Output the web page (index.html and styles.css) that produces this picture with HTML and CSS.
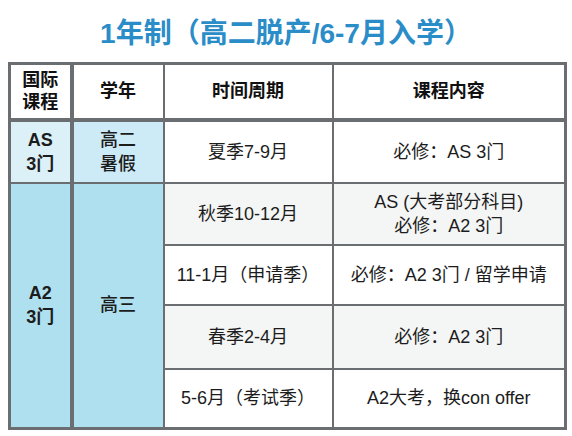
FILE: index.html
```html
<!DOCTYPE html>
<html lang="zh-CN">
<head>
<meta charset="utf-8">
<title>1年制</title>
<link rel="stylesheet" href="styles.css">
</head>
<body>
<h1 class="title">1年制（高二脱产/6-7月入学）</h1>
<table class="plan">
  <colgroup>
    <col class="w1"><col class="w2"><col class="w3"><col class="w4">
  </colgroup>
  <thead>
    <tr class="r-head">
      <th class="c1">国际<br>课程</th>
      <th>学年</th>
      <th>时间周期</th>
      <th>课程内容</th>
    </tr>
  </thead>
  <tbody>
    <tr class="r-as">
      <td class="c1 bg-as1">AS<br>3门</td>
      <td class="c2 bg-as2">高二<br>暑假</td>
      <td>夏季7-9月</td>
      <td>必修：AS 3门</td>
    </tr>
    <tr class="r2 alt">
      <td class="c1 bg-a2" rowspan="4">A2<br>3门</td>
      <td class="c2 bg-a2" rowspan="4">高三</td>
      <td>秋季10-12月</td>
      <td>AS (大考部分科目)<br>必修：A2 3门</td>
    </tr>
    <tr class="r3">
      <td>11-1月（申请季）</td>
      <td>必修：A2 3门 / 留学申请</td>
    </tr>
    <tr class="r4 alt">
      <td>春季2-4月</td>
      <td>必修：A2 3门</td>
    </tr>
    <tr class="r5">
      <td>5-6月（考试季）</td>
      <td>A2大考，换con offer</td>
    </tr>
  </tbody>
</table>
</body>
</html>
```

FILE: styles.css
```css
html, body {
  margin: 0;
  padding: 0;
  background: #ffffff;
}

body {
  font-family: "Liberation Sans", "Noto Sans CJK SC", sans-serif;
  color: #1c1c1c;
}

.title {
  margin: 0;
  height: 62px;
  box-sizing: border-box;
  padding-top: 17px;
  text-align: center;
  font-size: 28px;
  line-height: 34px;
  font-weight: bold;
  color: #2b8dc8;
}

.plan {
  margin-left: 8px;
  border-collapse: collapse;
  table-layout: fixed;
  width: 556px;
  border: 3px solid #6b6e70;
  font-size: 18px;
  line-height: 24px;
}

.w1 { width: 62px; }
.w2 { width: 92px; }
.w3 { width: 169px; }
.w4 { width: 233px; }

.plan th,
.plan td {
  border: 2px solid #6b6e70;
  text-align: center;
  vertical-align: middle;
  padding: 0;
}

.plan th {
  font-weight: bold;
  color: #111;
  background: #ffffff;
  border-bottom-width: 4px;
  line-height: 22px;
}

.plan .c1 {
  border-right-width: 4px;
  border-left-width: 3px;
  font-weight: bold;
}

.plan .c2 {
  font-weight: 500;
}

.r-head { height: 56px; }
.r-as { height: 63px; }
.r2 { height: 62px; }
.r3 { height: 60px; }
.r4 { height: 64px; }
.r5 { height: 60px; }

.alt td { background: #f4f5f5; }

.plan .bg-as1 { background: #dcf0f8; }
.plan .bg-as2 { background: #cdebf6; }
.plan .bg-a2 { background: #aee0ef; }
```
